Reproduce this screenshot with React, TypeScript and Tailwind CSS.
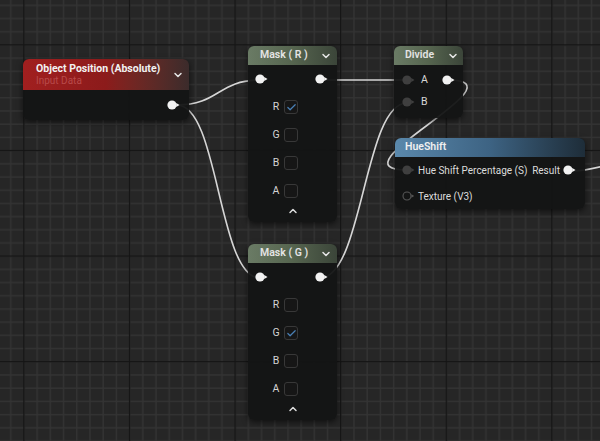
import { Check, ChevronDown, ChevronUp } from "lucide-react";

// Unreal-style material graph: grid canvas, wires, nodes

function Grid() {
  const minor = Array.from({ length: 8 }, (_, i) => i * 13.2);
  return (
    <svg className="absolute inset-0" width="600" height="441">
      <defs>
        <pattern id="grid" x="23.3" y="44.3" width="105.6" height="105.6" patternUnits="userSpaceOnUse">
          {minor.map((p) => (
            <rect key={"v" + p} x={p} y={0} width={1.4} height={105.6} fill="#333333" />
          ))}
          {minor.map((p) => (
            <rect key={"h" + p} x={0} y={p} width={105.6} height={1.4} fill="#333333" />
          ))}
          <rect x={0} y={0} width={1.3} height={105.6} fill="#141414" />
          <rect x={0} y={0} width={105.6} height={1.3} fill="#141414" />
        </pattern>
      </defs>
      <rect width="600" height="441" fill="url(#grid)" />
    </svg>
  );
}

const wire = (x1: number, y1: number, x2: number, y2: number, d: number) =>
  `M${x1} ${y1} C${x1 + d} ${y1} ${x2 - d} ${y2} ${x2} ${y2}`;

function Wires() {
  const paths = [
    wire(177, 105, 260, 80, 42),
    wire(177, 105, 260, 278, 42),
    wire(320, 80, 407, 80, 30),
    wire(320, 278, 407, 103, 43),
    wire(448, 80, 407, 170, 80),
    wire(570, 171, 640, 160, 30),
  ];
  return (
    <svg className="absolute inset-0" width="600" height="441">
      {paths.map((d, i) => (
        <path key={i} d={d} fill="none" stroke="#d6d6d6" strokeWidth={1.6} />
      ))}
    </svg>
  );
}

function OutPin() {
  return (
    <svg width="13" height="10" viewBox="0 0 13 10" className="shrink-0">
      <circle cx="5" cy="5" r="4.6" fill="#f2f2f2" />
      <polygon points="9.2,2.9 12.5,5 9.2,7.1" fill="#f2f2f2" />
    </svg>
  );
}

function InPin() {
  return (
    <svg width="13" height="10" viewBox="0 0 13 10" className="shrink-0">
      <circle cx="5" cy="5" r="4.6" fill="#3f3f3f" />
      <polygon points="9.2,2.9 12.5,5 9.2,7.1" fill="#3f3f3f" />
    </svg>
  );
}

function HollowPin() {
  return (
    <svg width="13" height="10" viewBox="0 0 13 10" className="shrink-0">
      <circle cx="5" cy="5" r="4" fill="none" stroke="#575757" strokeWidth="1.1" />
      <polygon points="9.4,3.2 12.2,5 9.4,6.8" fill="#575757" />
    </svg>
  );
}

function Checkbox({ checked }: { checked: boolean }) {
  return (
    <div className="w-[14px] h-[14px] rounded-[3px] border border-[#383838] bg-[#161616] flex items-center justify-center">
      {checked && <Check size={11} strokeWidth={2.6} className="text-[#4a80b6]" />}
    </div>
  );
}

function MaskNode({ className, title, channel }: { className: string; title: string; channel: string }) {
  return (
    <div className={"absolute rounded-[6px] bg-[#131414]/95 shadow-[0_2px_6px_rgba(0,0,0,0.6)] flex flex-col " + className}>
      <div className="h-[19px] rounded-t-[6px] bg-linear-to-r from-[#6a7b65] via-[#56654f] to-[#3b4539] flex items-center pl-[12px] pr-[5px] justify-between">
        <span className="text-[10.5px] font-semibold text-[#e4e4e4] leading-none">{title}</span>
        <ChevronDown size={12} strokeWidth={3} className="text-[#e6e6e6]" />
      </div>
      <div className="h-[28px] flex items-center justify-between pl-[7px] pr-[9px]">
        <OutPin />
        <OutPin />
      </div>
      {["R", "G", "B", "A"].map((c) => (
        <div key={c} className="h-[28px] flex items-center pl-[24px]">
          <span className="w-[8px] text-center text-[10.5px] text-[#d4d4d4]">{c}</span>
          <div className="ml-[4px]">
            <Checkbox checked={c === channel} />
          </div>
        </div>
      ))}
      <div className="h-[17px] flex items-start justify-center">
        <ChevronUp size={12} strokeWidth={3} className="text-[#dcdcdc]" />
      </div>
    </div>
  );
}

export default function App() {
  return (
    <div className="relative w-[600px] h-[441px] overflow-hidden bg-[#262626] font-['Roboto','Liberation_Sans',sans-serif]">
      <Grid />
      <Wires />

      {/* Object Position (Absolute) */}
      <div className="absolute left-[23px] top-[59px] w-[166px] h-[61px] rounded-[6px] bg-[#131414]/95 shadow-[0_2px_6px_rgba(0,0,0,0.6)] flex flex-col">
        <div className="h-[31px] rounded-t-[6px] bg-linear-to-r from-[#a11f1f] via-[#8c1b1b] to-[#3b2b2b] flex items-center justify-between pl-[13px] pr-[5px]">
          <div className="flex flex-col">
            <span className="text-[10.5px] font-bold text-[#f2f2f2] leading-[12px]">Object Position (Absolute)</span>
            <span className="text-[10px] text-[#b84a4a] leading-[12px]">Input Data</span>
          </div>
          <ChevronDown size={12} strokeWidth={3} className="text-[#e6e6e6]" />
        </div>
        <div className="h-[30px] flex items-center justify-end pr-[9px]">
          <OutPin />
        </div>
      </div>

      <MaskNode className="left-[248px] top-[46px] w-[89px] h-[176px]" title="Mask ( R )" channel="R" />
      <MaskNode className="left-[248px] top-[244px] w-[89px] h-[176px]" title="Mask ( G )" channel="G" />

      {/* Divide */}
      <div className="absolute left-[394px] top-[46px] w-[69px] h-[72px] rounded-[6px] bg-[#131414]/95 shadow-[0_2px_6px_rgba(0,0,0,0.6)] flex flex-col">
        <div className="h-[19px] rounded-t-[6px] bg-linear-to-r from-[#6a7b65] via-[#56654f] to-[#3b4539] flex items-center justify-between pl-[11px] pr-[4px]">
          <span className="text-[10.5px] font-semibold text-[#e4e4e4] leading-none">Divide</span>
          <ChevronDown size={12} strokeWidth={3} className="text-[#e6e6e6]" />
        </div>
        <div className="flex flex-col pt-[4px]">
          <div className="h-[22px] flex items-center pl-[8px] pr-[8px]">
            <InPin />
            <span className="ml-[6px] text-[10.5px] text-[#d8d8d8] flex-1">A</span>
            <OutPin />
          </div>
          <div className="h-[22px] flex items-center pl-[8px]">
            <InPin />
            <span className="ml-[6px] text-[10.5px] text-[#d8d8d8]">B</span>
          </div>
        </div>
      </div>

      {/* HueShift */}
      <div className="absolute left-[395px] top-[138px] w-[190px] h-[71px] rounded-[6px] bg-[#131414]/95 shadow-[0_2px_6px_rgba(0,0,0,0.6)] flex flex-col">
        <div className="h-[19px] rounded-t-[6px] bg-linear-to-r from-[#5a88ab] via-[#3d6383] to-[#1e2d39] flex items-center pl-[10px]">
          <span className="text-[10.5px] font-semibold text-[#f0f0f0] leading-none">HueShift</span>
        </div>
        <div className="h-[26px] flex items-center pl-[7px] pr-[9px]">
          <InPin />
          <span className="ml-[3px] text-[10px] text-[#dcdcdc] flex-1">Hue Shift Percentage (S)</span>
          <span className="text-[10px] text-[#dcdcdc] mr-[3px]">Result</span>
          <OutPin />
        </div>
        <div className="h-[26px] flex items-center pl-[7px]">
          <HollowPin />
          <span className="ml-[3px] text-[10px] text-[#dcdcdc]">Texture (V3)</span>
        </div>
      </div>
    </div>
  );
}
